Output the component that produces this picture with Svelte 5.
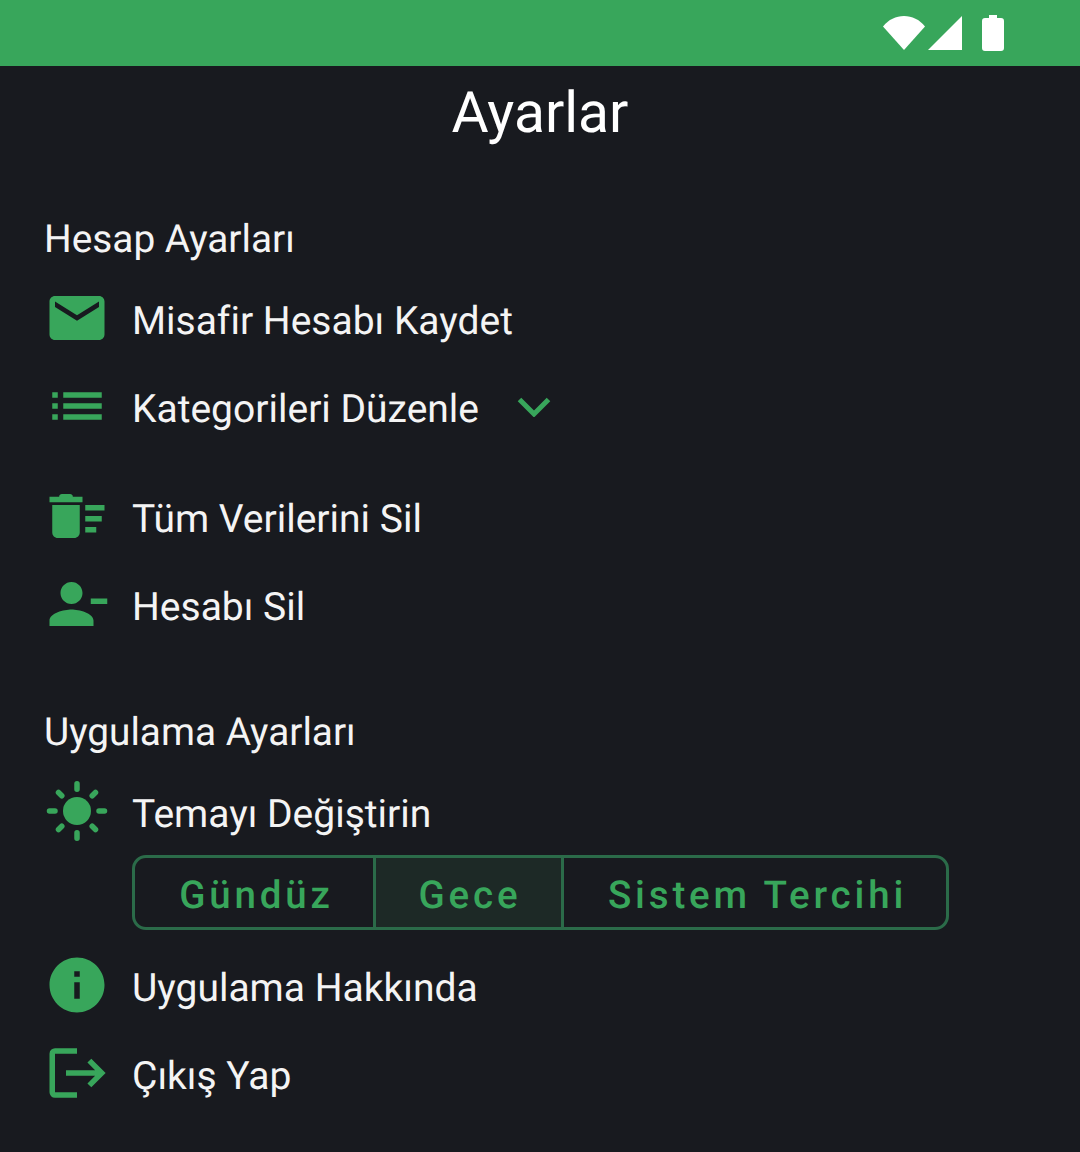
<script>
  const green = "#38a65b"
</script>

<div class="screen">
  <div class="status-bar">
    <svg class="wifi" viewBox="0 0 42 34"><path d="M0 10.5C5.5 3.5 13 0 21 0s15.500 3.500 21 10.500L21 34z" fill="#fff" /></svg>
    <svg class="signal" viewBox="0 0 34 34"><path d="M34 0v34H0z" fill="#fff" /></svg>
    <svg class="battery" viewBox="0 0 22 36"><path d="M7 0h8v3h4a3 3 0 0 1 3 3v27a3 3 0 0 1-3 3H3a3 3 0 0 1-3-3V6a3 3 0 0 1 3-3h4z" fill="#fff" /></svg>
  </div>

  <h1>Ayarlar</h1>

  <h2 class="first">Hesap Ayarları</h2>
  <div class="row">
    <svg class="icon" viewBox="0 0 24 24"><path fill={green} d="M20 4H4c-1.100 0-2 .9-2 2v12c0 1.100.9 2 2 2h16c1.100 0 2-.9 2-2V6c0-1.100-.9-2-2-2zm0 4l-8 5-8-5V6l8 5 8-5v2z" /></svg>
    <span>Misafir Hesabı Kaydet</span>
  </div>
  <div class="row">
    <svg class="icon" viewBox="0 0 24 24"><path fill={green} d="M3 13h2v-2H3v2zm0 4h2v-2H3v2zm0-8h2V7H3v2zm4 4h14v-2H7v2zm0 4h14v-2H7v2zM7 7v2h14V7H7z" /></svg>
    <span>Kategorileri Düzenle</span>
    <svg class="chevron" viewBox="0 0 34 20"><path d="M2.500 2.500L17 17 31.500 2.500" fill="none" stroke={green} stroke-width="5" /></svg>
  </div>
  <div class="row spaced">
    <svg class="icon" viewBox="0 0 24 24"><path fill={green} d="M15 16h4v2h-4zm0-8h7v2h-7zm0 4h6v2h-6zM3 18c0 1.100.9 2 2 2h6c1.100 0 2-.9 2-2V8H3v10zM14 5h-3.500c0-.6-.5-1-1-1h-3c-.5 0-1 .4-1 1H2v2h12z" /></svg>
    <span>Tüm Verilerini Sil</span>
  </div>
  <div class="row">
    <svg class="icon" viewBox="0 0 24 24"><path fill={green} d="M14 8c0-2.210-1.790-4-4-4S6 5.790 6 8s1.790 4 4 4 4-1.790 4-4zm3 2v2h6v-2h-6zM2 18v2h16v-2c0-2.660-5.330-4-8-4s-8 1.340-8 4z" /></svg>
    <span>Hesabı Sil</span>
  </div>

  <h2 class="second">Uygulama Ayarları</h2>
  <div class="row">
    <svg class="icon" viewBox="0 0 66 66">
      <circle cx="33" cy="33" r="14" fill={green} />
      <path d="M33 5.750v5.500M33 54.750v5.500M5.500 33h5.500M55 33h5.500" stroke={green} stroke-width="5.500" stroke-linecap="round" />
      <path d="M14.500 14.500l3.300 3.300M48.200 48.200l3.300 3.300M14.500 51.500l3.300-3.300M48.200 17.800l3.300-3.300" stroke={green} stroke-width="5.500" stroke-linecap="round" />
    </svg>
    <span>Temayı Değiştirin</span>
  </div>
  <div class="segments">
    <div class="segment day">Gündüz</div>
    <div class="segment night">Gece</div>
    <div class="segment system">Sistem Tercihi</div>
  </div>
  <div class="row about">
    <svg class="icon" viewBox="0 0 24 24"><path fill={green} d="M12 2C6.480 2 2 6.480 2 12s4.480 10 10 10 10-4.480 10-10S17.520 2 12 2zm1 15h-2v-6h2v6zm0-8h-2V7h2v2z" /></svg>
    <span>Uygulama Hakkında</span>
  </div>
  <div class="row">
    <svg class="icon" viewBox="0 0 24 24">
      <path d="M12 4H4a1 1 0 0 0-1 1v14a1 1 0 0 0 1 1h8M8 12h13M16.500 7.500L21 12l-4.500 4.500" fill="none" stroke={green} stroke-width="2" />
    </svg>
    <span>Çıkış Yap</span>
  </div>
</div>

<style>
  :global(body) {
    margin: 0;
    background: #181a1f;
  }

  .screen {
    height: 1152px;
    background: #181a1f;
    color: #f4f4f4;
    font-family: Roboto, sans-serif;
    font-variant-ligatures: none;
    text-rendering: geometricPrecision;
    overflow: hidden;
  }

  .status-bar {
    height: 66px;
    background: #38a65b;
    display: flex;
    align-items: center;
    justify-content: flex-end;
    padding-right: 76px;
  }

  .wifi {
    width: 42px;
    height: 34px;
    margin-top: -1px;
  }

  .signal {
    width: 34px;
    height: 34px;
    margin-left: 3px;
  }

  .battery {
    width: 22px;
    height: 36px;
    margin-left: 20px;
    margin-top: -1px;
  }

  h1 {
    margin: 0;
    height: 94px;
    line-height: 94px;
    text-align: center;
    font-size: 57px;
    font-weight: 400;
    color: #fff;
  }

  h2 {
    margin: 0 0 12px;
    padding-left: 44px;
    height: 50px;
    line-height: 52px;
    font-size: 38.800px;
    font-weight: 400;
  }

  h2.first {
    margin-top: 54px;
  }

  h2.second {
    margin-top: 57px;
  }

  .row {
    height: 88px;
    padding-left: 44px;
    display: flex;
    align-items: center;
    font-size: 39px;
  }

  .row span {
    padding-top: 2px;
  }

  .row.spaced {
    margin-top: 22px;
  }

  .row.about {
    margin-top: 13px;
  }

  .icon {
    width: 66px;
    height: 66px;
    flex: none;
    margin-right: 22px;
    margin-bottom: 4px;
  }

  .chevron {
    width: 34px;
    height: 20px;
    margin-left: 38px;
    margin-top: -3px;
  }

  .segments {
    margin: -2px 0 0 132px;
    width: 817px;
    height: 75px;
    box-sizing: border-box;
    border: 3px solid #2b6b49;
    border-radius: 14px;
    display: flex;
    overflow: hidden;
  }

  .segment {
    display: flex;
    align-items: center;
    justify-content: center;
    box-sizing: border-box;
    padding: 6px 0 0 5px;
    color: #38a65b;
    font-size: 38.500px;
    font-weight: 500;
    letter-spacing: 3.850px;
  }

  .day {
    width: 238px;
  }

  .night {
    width: 191px;
    padding-left: 3px;
    background: #1d2926;
    border-left: 3px solid #2b6b49;
    border-right: 3px solid #2b6b49;
  }

  .system {
    flex: 1;
  }
</style>
